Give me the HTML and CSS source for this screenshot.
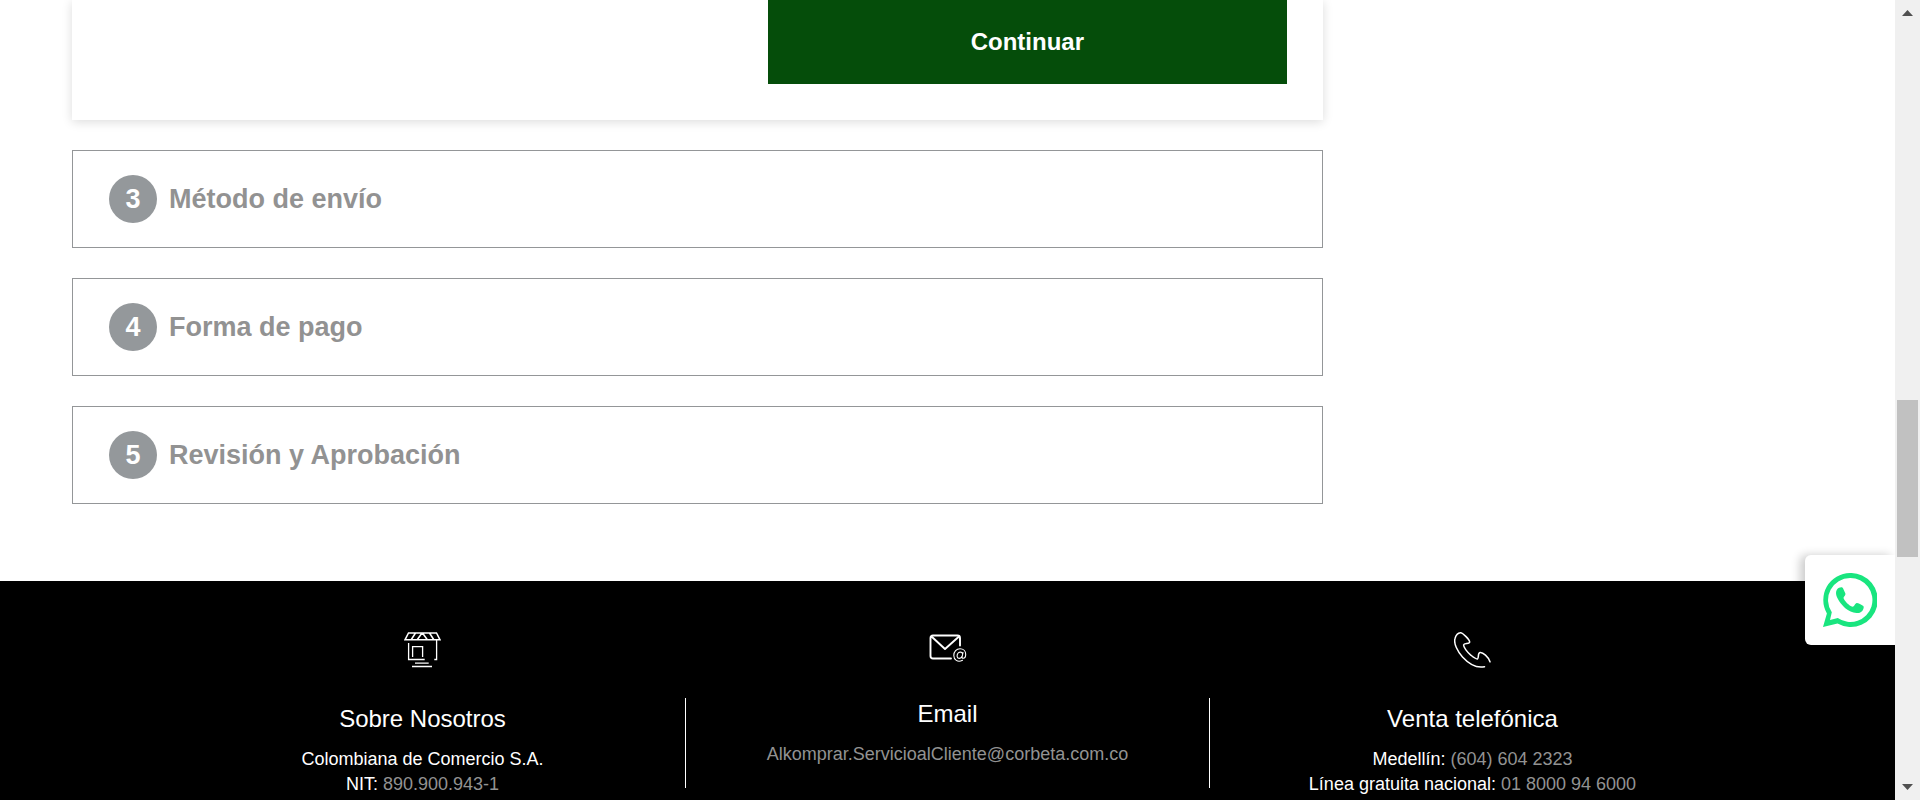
FILE: index.html
```html
<!DOCTYPE html>
<html lang="es">
<head>
<meta charset="utf-8">
<title>Alkomprar</title>
<meta name="viewport" content="width=device-width, initial-scale=1">
<link rel="stylesheet" href="styles.css">
</head>
<body>
<div class="page">
  <main class="checkout">
    <div class="steps">
      <section class="card">
        <button class="continue" type="button">Continuar</button>
      </section>
      <section class="step"><span class="step-number">3</span><h2 class="step-title">Método de envío</h2></section>
      <section class="step"><span class="step-number">4</span><h2 class="step-title">Forma de pago</h2></section>
      <section class="step"><span class="step-number">5</span><h2 class="step-title">Revisión y Aprobación</h2></section>
    </div>
  </main>
  <footer class="footer">
    <section class="info">
      <div class="icon">
        <svg width="37" height="36" viewBox="0 0 37 36" fill="none" stroke="#fff" stroke-width="1.3" aria-hidden="true">
          <path stroke-width="1.5" d="M4.500 1H32.500L36 7.800H1ZM11.500 1L7 8M18 1L13 8M18.500 1L23.500 8M25.500 1L30 8"/>
          <path d="M4.600 11V27.500H20.700M32.600 8V27.500H30.300M8.600 25V14.600H18.600V25M11 31.200H24.700M8 34.500H28"/>
        </svg>
      </div>
      <div class="info-body">
        <h3 class="info-title">Sobre Nosotros</h3>
        <p class="info-text">Colombiana de Comercio S.A.</p>
        <p class="info-text">NIT: <span class="muted">890.900.943-1</span></p>
      </div>
    </section>
    <section class="info info-middle">
      <div class="icon">
        <svg width="38" height="32" viewBox="0 0 38 32" fill="none" stroke="#fff" stroke-linecap="round" stroke-linejoin="round" aria-hidden="true">
          <path stroke-width="1.9" d="M22 24.500H4Q1.500 24.500 1.500 22V4Q1.500 1.500 4 1.500H28.500Q31 1.500 31 4V11.500M2.500 2.500L16 15L30 2.500"/>
          <path stroke-width="1.100" d="M33.500 26.300C28.500 29 24.800 25.500 24.800 21.500C24.800 17.500 27.500 14.800 31 14.800C34.500 14.800 36.700 17.300 36.700 20.300C36.700 23 35.300 24.300 34.200 24.300C33 24.300 33 23.500 33.200 22.500L34 18.500M33.600 19.900C33.300 18.600 32.300 18 31.200 18.100C29 18.300 28 20.600 28.100 22.300C28.300 25.200 32.200 25 33.200 22"/>
        </svg>
      </div>
      <div class="info-body">
        <h3 class="info-title">Email</h3>
        <p class="info-text"><a class="muted" href="mailto:Alkomprar.ServicioalCliente@corbeta.com.co">Alkomprar.ServicioalCliente@corbeta.com.co</a></p>
      </div>
    </section>
    <section class="info">
      <div class="icon">
        <svg width="37" height="36" viewBox="0 0 37 36" fill="none" stroke="#fff" stroke-width="1.5" stroke-linecap="round" stroke-linejoin="round" aria-hidden="true">
          <path d="M30.500 34.700C22 36.500 14 31 8.500 25C3.500 19.500-.5 11.500 1 6.500C1.800 3.500 4.300 1 6.500.8C8.500.600 15.500 7.500 15.700 10C15.800 12.300 10 10.800 9.600 12.800C9.300 15 13.500 20.500 17 23.300C19.500 25.400 22.300 27.500 23.600 26.800C25 26 23.500 21 26 20.500C28.800 20 34.500 25 36 29.800"/>
        </svg>
      </div>
      <div class="info-body">
        <h3 class="info-title">Venta telefónica</h3>
        <p class="info-text">Medellín: <span class="muted">(604) 604 2323</span></p>
        <p class="info-text">Línea gratuita nacional: <span class="muted">01 8000 94 6000</span></p>
      </div>
    </section>
  </footer>
</div>
<a class="whatsapp" href="#" aria-label="WhatsApp">
  <svg width="54" height="54" viewBox="0 0 54 54" fill="#19e57f" aria-hidden="true">
    <path fill-rule="evenodd" d="M27 0A27 27 0 1 1 14.500 50.500L0 54L3.900 40.500A27 27 0 0 1 27 0ZM27 5A22 22 0 0 0 8.800 39.300L7 47L14.800 45A22 22 0 1 0 27 5Z"/>
    <path d="M13 20C13 17.800 14.300 15.500 16 14.800C17.500 14.300 19.300 14 20 15.300L22.400 20.500C23 22.300 20.400 23.600 20.500 25C21.500 28 26 32.800 29.600 33.800C31.200 33.800 32 30.500 33.800 30.100C35 30 38.500 32 40.300 33C41.300 33.800 40.300 37 39 38.200C37.500 39.600 35.500 40.200 33.500 40C29.500 39.400 25.500 38 22.300 35.200C18.500 31.800 13 25 13 20Z"/>
  </svg>
</a>
<div class="scrollbar" aria-hidden="true">
  <svg width="11" height="6" viewBox="0 0 11 6" fill="#505050"><path d="M5.500 0L11 6H0Z"/></svg>
  <div class="track"><div class="thumb"></div></div>
  <svg width="11" height="6" viewBox="0 0 11 6" fill="#505050"><path d="M0 0H11L5.500 6Z"/></svg>
</div>
</body>
</html>
```
FILE: styles.css
```css
* {
  box-sizing: border-box;
}

body {
  margin: 0;
  height: 100vh;
  overflow: hidden;
  background: #fff;
  color: #929292;
  font-family: "Liberation Sans", Arial, sans-serif;
}

h2, h3, p {
  margin: 0;
}

.page {
  display: flex;
  flex-direction: column;
  min-height: 100vh;
  margin-right: 25px;
}

.checkout {
  display: grid;
  grid-template-columns: 5fr 2fr;
  padding: 0 72px 77px;
}

.steps {
  display: flex;
  flex-direction: column;
  gap: 30px;
}

.card {
  display: flex;
  justify-content: flex-end;
  padding: 0 36px 36px;
  box-shadow: 0 2px 10px rgba(0, 0, 0, 0.14);
}

.continue {
  width: 44%;
  height: 84px;
  padding: 0;
  border: 0;
  background: #054d0a;
  color: #fff;
  font: bold 24px/28px "Liberation Sans", Arial, sans-serif;
  cursor: pointer;
}

.step {
  display: flex;
  align-items: center;
  gap: 12px;
  padding: 24px 36px;
  border: 1px solid #949698;
}

.step-number {
  width: 48px;
  border-radius: 50%;
  background: #94989b;
  color: #fff;
  font-size: 27px;
  font-weight: bold;
  line-height: 48px;
  text-align: center;
}

.step-title {
  font-size: 27px;
  line-height: 48px;
}

.footer {
  display: grid;
  grid-template-columns: repeat(3, 1fr);
  flex: 1;
  padding: 49px 160px 0;
  background: #000;
  color: #fff;
  text-align: center;
}

.icon {
  display: flex;
  align-items: center;
  justify-content: center;
  height: 40px;
  margin-bottom: 33px;
}

.info-middle .icon {
  margin-bottom: 28px;
}

.info-middle .info-body {
  min-height: 90px;
  border: solid #fff;
  border-width: 0 1px;
}

.info-title {
  margin-bottom: 12px;
  font-size: 24px;
  font-weight: normal;
  line-height: 32px;
}

.info-text {
  font-size: 18px;
  line-height: 25px;
}

.muted {
  color: #929292;
  text-decoration: none;
}

.whatsapp {
  position: fixed;
  right: 25px;
  bottom: 155px;
  display: flex;
  align-items: center;
  justify-content: center;
  width: 90px;
  height: 90px;
  border-radius: 6px 0 0 6px;
  background: #fff;
  box-shadow: -5px 0 10px rgba(0, 0, 0, 0.2);
}

.scrollbar {
  position: fixed;
  top: 0;
  right: 0;
  bottom: 0;
  display: flex;
  flex-direction: column;
  align-items: center;
  width: 25px;
  padding: 10px 0;
  background: #f0f0f0;
}

.track {
  flex: 1;
  width: 21px;
  padding-top: 384px;
}

.thumb {
  height: 157px;
  background: #c1c1c1;
}
```
